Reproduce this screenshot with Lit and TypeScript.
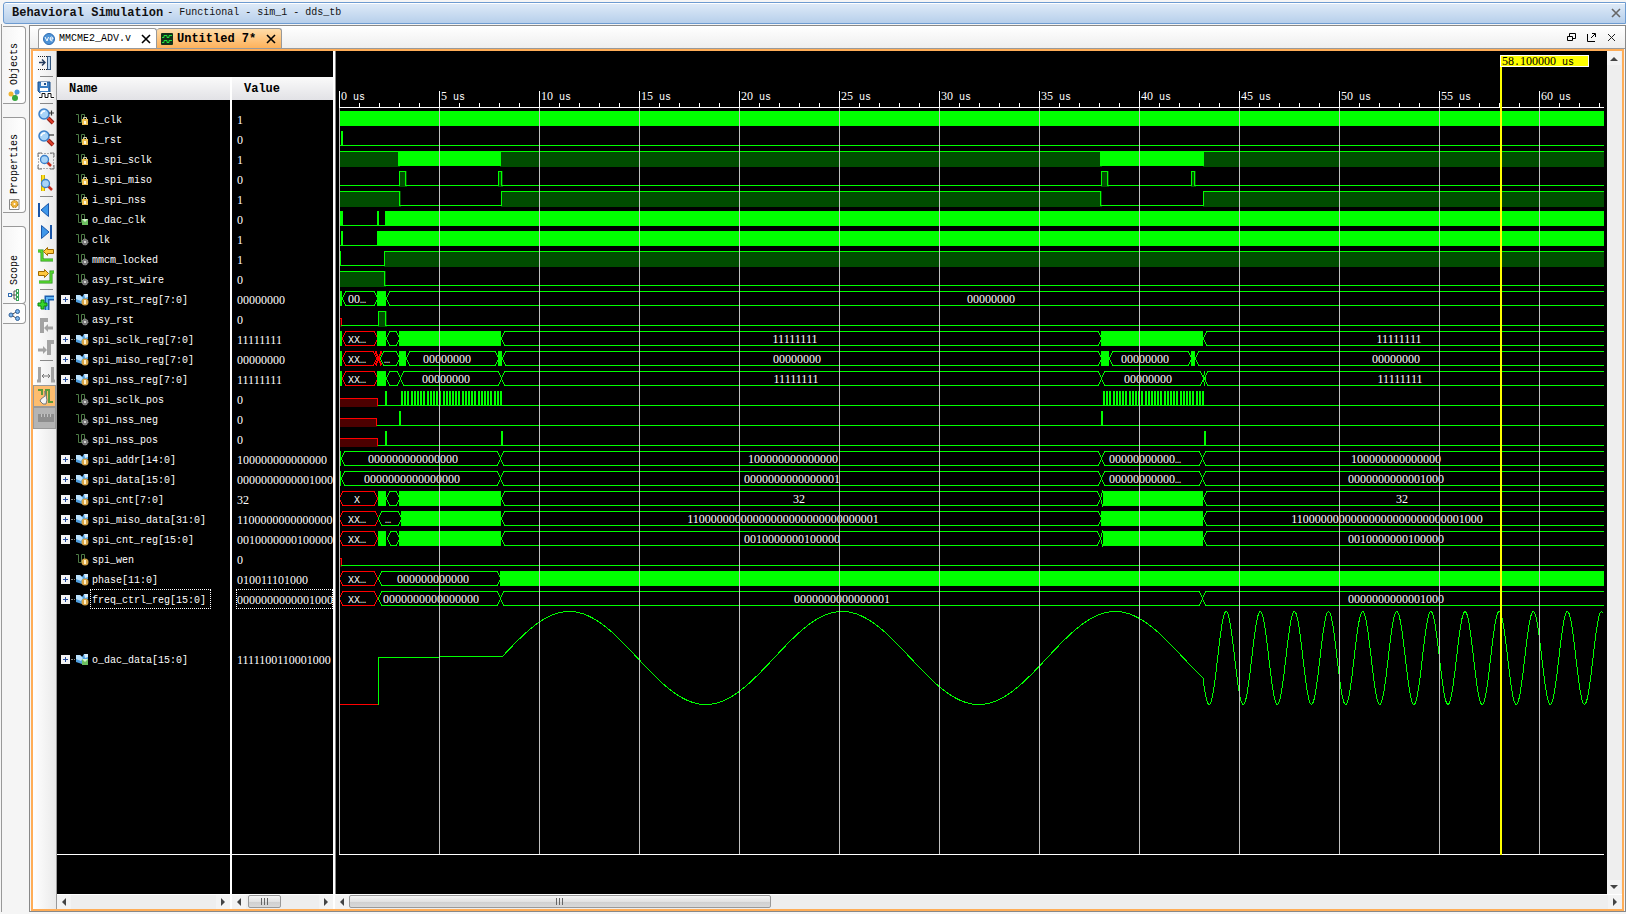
import { LitElement, html, svg, css, nothing } from "lit";
import { customElement, property, state } from "lit/decorators.js";
import { classMap } from "lit/directives/class-map.js";

type Kind = "in" | "out" | "net" | "reg" | "bus" | "busout";
/** Segment: [shape, start, end, label?, label centre?], positions in 50 ns steps. */
type Shape = "solid" | "high" | "low" | "hex" | "xhex" | "unk" | "comb" | "xx";
type Seg = [Shape, number, number, string?, number?];
interface Signal { name: string; value: string; kind: Kind; segs: Seg[]; focus?: boolean; tall?: boolean }

const END = 4000;
const O16 = "0000000000000001";
const L16 = "0000000000001000";

const SIGNALS: Signal[] = [
  { name: "i_clk", value: "1", kind: "in", segs: [["solid", 0, END]] },
  { name: "i_rst", value: "0", kind: "in", segs: [["low", 0, END], ["solid", 2, 4]] },
  { name: "i_spi_sclk", value: "1", kind: "in", segs: [["high", 0, 60], ["solid", 60, 161], ["high", 161, 762], ["solid", 762, 864], ["high", 864, END]] },
  { name: "i_spi_miso", value: "0", kind: "in", segs: [["low", 0, 60], ["high", 60, 67], ["low", 67, 159], ["high", 159, 163], ["low", 163, 762], ["high", 762, 769], ["low", 769, 852], ["high", 852, 856], ["low", 856, END]] },
  { name: "i_spi_nss", value: "1", kind: "in", segs: [["high", 0, 61], ["low", 61, 162], ["high", 162, 762], ["low", 762, 864], ["high", 864, END]] },
  { name: "o_dac_clk", value: "0", kind: "out", segs: [["solid", 0, 4], ["low", 4, 46], ["solid", 38, 40], ["solid", 46, END]] },
  { name: "clk", value: "1", kind: "net", segs: [["low", 0, 38], ["solid", 2, 4], ["solid", 38, END]] },
  { name: "mmcm_locked", value: "1", kind: "net", segs: [["solid", 0, 2], ["low", 1, 45], ["high", 45, END]] },
  { name: "asy_rst_wire", value: "0", kind: "net", segs: [["high", 0, 46], ["low", 45, END]] },
  { name: "asy_rst_reg[7:0]", value: "00000000", kind: "bus", segs: [["solid", 0, 3], ["hex", 3, 38, "00…", 18], ["solid", 38, 47], ["hex", 47, END, "00000000", 652]] },
  { name: "asy_rst", value: "0", kind: "net", segs: [["unk", 0, 3], ["low", 2, 39], ["high", 39, 47], ["low", 47, END]] },
  { name: "spi_sclk_reg[7:0]", value: "11111111", kind: "bus", segs: [["solid", 0, 3], ["xhex", 3, 38, "XX…", 18], ["solid", 38, 47], ["hex", 47, 60], ["solid", 60, 162], ["hex", 162, 762, "11111111", 456], ["solid", 762, 864], ["hex", 864, END, "11111111", 1060]] },
  { name: "spi_miso_reg[7:0]", value: "00000000", kind: "bus", segs: [["solid", 0, 3], ["xhex", 3, 37, "XX…", 18], ["xx", 36, 42], ["hex", 41, 60, "…", 48], ["solid", 60, 67], ["hex", 67, 159, "00000000", 108], ["solid", 159, 163], ["hex", 163, 762, "00000000", 458], ["solid", 762, 770], ["hex", 770, 852, "00000000", 806], ["solid", 852, 856], ["hex", 856, END, "00000000", 1057]] },
  { name: "spi_nss_reg[7:0]", value: "11111111", kind: "bus", segs: [["solid", 0, 3], ["xhex", 3, 38, "XX…", 18], ["solid", 38, 47], ["hex", 47, 61], ["hex", 61, 162, "00000000", 107], ["hex", 162, 762, "11111111", 457], ["hex", 762, 864, "00000000", 809], ["hex", 864, 866], ["hex", 865, END, "11111111", 1061]] },
  { name: "spi_sclk_pos", value: "0", kind: "net", segs: [["unk", 0, 39], ["low", 39, END], ["solid", 46, 48], ["comb", 62, 163], ["comb", 764, 865]] },
  { name: "spi_nss_neg", value: "0", kind: "net", segs: [["unk", 0, 38], ["low", 38, END], ["solid", 60, 62], ["solid", 762, 764]] },
  { name: "spi_nss_pos", value: "0", kind: "net", segs: [["unk", 0, 39], ["low", 39, END], ["solid", 46, 48], ["solid", 162, 164], ["solid", 865, 867]] },
  { name: "spi_addr[14:0]", value: "100000000000000", kind: "bus", segs: [["solid", 0, 2], ["hex", 2, 161, "000000000000000", 74], ["hex", 161, 762, "100000000000000", 454], ["hex", 762, 863, "00000000000…", 806], ["hex", 863, END, "100000000000000", 1057]] },
  { name: "spi_data[15:0]", value: L16, kind: "bus", segs: [["solid", 0, 2], ["hex", 2, 161, "0000000000000000", 73], ["hex", 161, 762, O16, 453], ["hex", 762, 863, "00000000000…", 806], ["hex", 863, END, L16, 1057]] },
  { name: "spi_cnt[7:0]", value: "32", kind: "bus", segs: [["xhex", 0, 38, "X", 18], ["solid", 39, 47], ["hex", 47, 60], ["solid", 60, 162], ["hex", 162, 761, "32", 460], ["hex", 761, 765], ["solid", 764, 864], ["hex", 864, END, "32", 1063]] },
  { name: "spi_miso_data[31:0]", value: "1100000000000000", kind: "bus", segs: [["xhex", 0, 39, "XX…", 18], ["hex", 39, 62, "…", 49], ["solid", 62, 162], ["hex", 162, 762, "11000000000000000000000000000001", 444], ["solid", 762, 864], ["hex", 864, END, "11000000000000000000000000001000", 1048]] },
  { name: "spi_cnt_reg[15:0]", value: "0010000000100000", kind: "bus", segs: [["xhex", 0, 38, "XX…", 18], ["solid", 39, 47], ["hex", 48, 60], ["solid", 60, 162], ["hex", 162, 761, "0010000000100000", 453], ["hex", 761, 765], ["solid", 764, 864], ["hex", 864, END, "0010000000100000", 1057]] },
  { name: "spi_wen", value: "0", kind: "reg", segs: [["unk", 0, 3], ["low", 2, END]] },
  { name: "phase[11:0]", value: "010011101000", kind: "bus", segs: [["xhex", 0, 38, "XX…", 18], ["hex", 39, 161, "000000000000", 94], ["solid", 161, END]] },
  { name: "freq_ctrl_reg[15:0]", value: L16, kind: "bus", focus: true, segs: [["xhex", 0, 38, "XX…", 18], ["hex", 39, 161, "0000000000000000", 92], ["hex", 161, 863, O16, 503], ["hex", 863, END, L16, 1057]] },
  { name: "o_dac_data[15:0]", value: "1111100110001000", kind: "busout", tall: true, segs: [] },
];

const cross = svg`<path d="M1 1L9 9M9 1L1 9" fill="none" stroke="currentColor" stroke-width="1.600"/>`;

const lens = svg`
  <path d="M11 10L16 15" stroke="#8f1d14" stroke-width="4"/><path d="M11 10L16 15" stroke="#e0402c" stroke-width="2"/>
  <circle cx="7" cy="6" r="5" fill="#a8d4f8" stroke="#3b7fc8" stroke-width="1.5"/><path d="M4 6Q5 3 8 3" stroke="#fff" fill="none" stroke-width="1.5"/>`;

const TOOLS: Record<string, unknown> = {
  "Dock panel": svg`<path d="M1 2.500H11M1 15.500H11" stroke="#222" stroke-dasharray="1 1"/><path d="M2 8.500H8M5 5.500L8 8.500L5 11.500" fill="none" stroke="#223a5c" stroke-width="1.4"/><rect x="10.5" y="2.5" width="3" height="13" fill="#bcd8f2" stroke="#35577f"/>`,
  "Save waveform": svg`<path d="M1 1H13V12H3L1 10Z" fill="#3c7fc4" stroke="#1d4f8a"/><rect x="4" y="1" width="6" height="4" fill="#eef5fc"/><rect x="7" y="2" width="2" height="2" fill="#1d4f8a"/><rect x="3" y="7" width="8" height="3" fill="#fff"/><path d="M2 16.500H5V12.500H8V16.500H11V12.500H14V16.500H17" stroke="#fff" stroke-width="3" fill="none"/><path d="M2 16.500H5V12.500H8V16.500H11V12.500H14V16.500H17" stroke="#111" fill="none"/>`,
  "Zoom in": svg`${lens}<path d="M12 5H17M14.500 2.500V7.500" stroke="#333" stroke-width="1.2"/>`,
  "Zoom out": svg`${lens}<path d="M12 5H17" stroke="#333" stroke-width="1.2"/>`,
  "Zoom fit": svg`<rect x="1.500" y="1.500" width="15" height="15" fill="none" stroke="#666" stroke-dasharray="1 2"/><path d="M1 5V1H5M13 1H17V5M17 13V17H13M5 17H1V13" fill="none" stroke="#777"/><path d="M10 10L14 14" stroke="#c8301f" stroke-width="2.500"/><circle cx="7.500" cy="7.500" r="4" fill="#a8d4f8" stroke="#3b7fc8" stroke-width="1.300"/>`,
  "Zoom to cursor": svg`<path d="M6 1V17" stroke="#b99700" stroke-width="4"/><path d="M6 1V17" stroke="#ffe21c" stroke-width="2.500"/><path d="M11 12L15 16" stroke="#c8301f" stroke-width="2.500"/><circle cx="8.500" cy="9.500" r="4" fill="#a8d4f8" stroke="#3b7fc8" stroke-width="1.300"/>`,
  "Go to time 0": svg`<path d="M1 2H3V16H1Z" fill="#1b56a8"/><path d="M11.500 2.500V15.500L4 9Z" fill="#3f97ea" stroke="#1b56a8"/>`,
  "Go to last time": svg`<path d="M13 2H15V16H13Z" fill="#1b56a8"/><path d="M4.500 2.500V15.500L12 9Z" fill="#3f97ea" stroke="#1b56a8"/>`,
  "Previous transition": svg`<path d="M1 6H5V15H16" fill="none" stroke="#208a12" stroke-width="3"/><path d="M1 6H5V15H16" fill="none" stroke="#5be035" stroke-width="1.500"/><path d="M6.500 6.500L10.500 2.500V4.500H16.500V8.500H10.500V10.500Z" fill="#ffc83d" stroke="#a06a00"/>`,
  "Next transition": svg`<path d="M2 15H14V5H17" fill="none" stroke="#208a12" stroke-width="3"/><path d="M2 15H14V5H17" fill="none" stroke="#5be035" stroke-width="1.500"/><path d="M11.500 6.500L7.500 2.500V4.500H1.500V8.500H7.500V10.500Z" fill="#ffc83d" stroke="#a06a00"/>`,
  "Add marker": svg`<path d="M10 16V4H17" fill="none" stroke="#1b5fae" stroke-width="5"/><path d="M10 16V4H17" fill="none" stroke="#5eb4f4" stroke-width="2"/><path d="M1 9H4V6H7V9H10V12H7V15H4V12H1Z" fill="#35d52b" stroke="#118310"/>`,
  "Previous marker": svg`<path d="M5 17V4H11" fill="none" stroke="#a3a3a3" stroke-width="4"/><path d="M7 12L11 8V10.500H16V13.500H11V16Z" fill="#a3a3a3"/>`,
  "Next marker": svg`<path d="M12 17V4H17" fill="none" stroke="#a3a3a3" stroke-width="4"/><path d="M10 12L6 8V10.500H1V13.500H6V16Z" fill="#a3a3a3"/>`,
  "Swap cursors": svg`<path d="M2.500 2V16H0M15.500 2V16H18" fill="none" stroke="#a3a3a3" stroke-width="3"/><path d="M5 11H13M7 9L5 11L7 13M11 9L13 11L11 13" stroke="#777" fill="none"/>`,
  "Snap to transition": svg`<path d="M1 3H5V8M9 15V3H12V15H16" fill="none" stroke="#5c9a3a" stroke-width="2"/><path d="M8 4L8 9L4 12L3 14L6 17H9L10 13Z" fill="#f4f4f4" stroke="#777"/>`,
  "Floating ruler": svg`<rect x="1" y="5" width="16" height="8" fill="#8e8e8e"/><path d="M4.500 5V8M7.500 5V8M10.500 5V8M13.500 5V8" stroke="#c4c4c4"/>`,
};
const SEPARATOR_AFTER = new Set(["Dock panel", "Save waveform", "Zoom to cursor", "Next transition", "Next marker"]);

@customElement("signal-icon")
class SignalIcon extends LitElement {
  @property() kind: Kind = "net";
  static styles = css`:host { display: block; width: 13px; height: 13px; flex: none; } svg { display: block; }`;
  render() {
    const k = this.kind;
    const bus = k === "bus" || k === "busout";
    const base = bus
      ? svg`<path d="M0 2H4L6 4L8 1H12V6L8 8L6 11L0 9Z" fill="#4f9fe0"/><path d="M0 2H4L7 5L5 8L0 6Z" fill="#b9e0fb"/><path d="M8 1H12V4L9 5Z" fill="#d4ecfd"/>`
      : svg`<path d="M0 1.500H2.500V9.500H5.500V1.500H8.500V6" fill="none" stroke="#4d7a45"/>`;
    const badge = k === "in"
      ? svg`<rect x="6" y="6" width="6" height="6" fill="#f0c050"/><rect x="8" y="8" width="2" height="3" fill="#fff8dc"/><path d="M7.500 6V4.500H10.500V6" fill="none" stroke="#d8d0b0"/>`
      : k === "out" || k === "busout"
        ? svg`<rect x="6" y="6" width="6" height="6" fill="#6cc060"/><path d="M6 6H12L9 9Z" fill="#d9f3d2"/>`
        : k === "net"
          ? svg`<circle cx="9" cy="9" r="3" fill="#777" stroke="#b4b4b4" stroke-dasharray="1 1"/><circle cx="9" cy="9" r="1" fill="#eee"/>`
          : svg`<circle cx="9" cy="9" r="3.500" fill="#d9a648"/><rect x="8" y="7" width="2" height="4" fill="#fff0c8"/>`;
    return html`<svg width="13" height="13" aria-hidden="true">${base}${badge}</svg>`;
  }
}

@customElement("scroll-strip")
class ScrollStrip extends LitElement {
  @property({ type: Boolean, reflect: true }) vertical = false;
  /** Thumb start and length as a share of the track, in percent. */
  @property({ type: Number }) start = 0;
  @property({ type: Number }) size = 0;
  static styles = css`
    :host { display: flex; flex: none; height: 14px; background: #eee; border-top: 1px solid #fff; box-sizing: content-box; }
    :host([vertical]) { flex-direction: column; width: 15px; height: auto; border: 0; }
    button { width: 14px; height: 14px; padding: 0; border: 0; background: #f3f3f3; flex: none; }
    svg { display: block; margin: auto; }
    .track { flex: 1; display: flex; }
    .thumb { border: 1px solid #999; border-radius: 2px; box-sizing: border-box; height: 13px; background: linear-gradient(#f6f6f6, #e2e2e2 50%, #cfcfcf 51%, #d9d9d9); display: flex; align-items: center; justify-content: center; }
  `;
  render() {
    const [a, b] = this.vertical ? ["M1 8L5 4L9 8Z", "M1 3L5 7L9 3Z"] : ["M7 1V9L3 5Z", "M3 1V9L7 5Z"];
    return html`
      <button aria-label="Scroll back"><svg width="10" height="10"><path d=${a} fill="#444"/></svg></button>
      <div class="track">
        <div style="width:${this.start}%"></div>
        ${this.size ? html`<div class="thumb" style="width:${this.size}%"><svg width="9" height="7"><path d="M1.500 0V7M4.500 0V7M7.500 0V7" stroke="#666"/></svg></div>` : nothing}
      </div>
      <button aria-label="Scroll forward"><svg width="10" height="10"><path d=${b} fill="#444"/></svg></button>`;
  }
}

@customElement("wave-view")
class WaveView extends LitElement {
  /** Visible length of the time axis, in 50 ns steps. */
  @state() private span = 1265;
  private observer?: ResizeObserver;

  static styles = css`
    :host { display: block; min-height: 0; overflow: hidden; }
    svg { display: block; width: 100%; height: 100%; shape-rendering: crispEdges; }
    text { font-family: "Liberation Mono", monospace; font-size: 10px; fill: #fff; }
    .num { font-family: "Liberation Serif", serif; font-size: 12px; }
    .dark { fill: #004d00; }
    .lit { fill: #0f0; }
    .wire { fill: none; stroke: #0f0; }
    .bad { fill: none; stroke: #f00; }
    .badfill { fill: #4d0000; }
    .grid { fill: #c0c0c0; }
    .white { fill: #fff; }
    .cursor { fill: #ff0; }
    .flag { fill: #ff0; stroke: #fff; }
    .flagtext { fill: #000; }
  `;

  connectedCallback() {
    super.connectedCallback();
    this.observer = new ResizeObserver(([e]) => { this.span = Math.floor(e.contentRect.width) - 3; });
    this.observer.observe(this);
  }

  disconnectedCallback() {
    this.observer?.disconnect();
    super.disconnectedCallback();
  }

  private mixed(t: string) {
    return t.split(/(\d+)/).filter(Boolean).map((p) => (/\d/.test(p) ? svg`<tspan class="num">${p}</tspan>` : p));
  }

  private seg([shape, a, b, label, at]: Seg, y: number) {
    const w = b - a;
    const l = a + 0.5, r = b + 0.5, t = y + 0.5, m = y + 7.5, d = y + 14.5;
    switch (shape) {
      case "solid": return svg`<rect class="lit" x=${a} y=${y} width=${w} height="15"/>`;
      case "low": return svg`<rect class="lit" x=${a} y=${y + 14} width=${w} height="1"/>`;
      case "high": return svg`<rect class="dark" x=${a} y=${y} width=${w + 1} height="16"/><path class="wire" d="M${l} ${d}V${t}H${r - 1}V${d}"/>`;
      case "unk": return svg`<rect class="badfill" x=${a} y=${y + 7} width=${w} height="9"/><path class="bad" d="M${l} ${d}V${m}H${r - 1}V${d}"/>`;
      case "comb": return Array.from({ length: 32 }, (_, i) => svg`<rect class="lit" x=${a + Math.round((i * (w - 2)) / 31)} y=${y} width="2" height="15"/>`);
      case "xx": return svg`<path class="bad" stroke-width="2" d="M${l} ${t}L${r} ${d}M${r} ${t}L${l} ${d}"/>`;
      default: {
        const s = Math.min(3, w / 2);
        const cls = shape === "xhex" ? "bad" : "wire";
        return svg`<path class=${cls} d="M${l} ${m}L${l + s} ${t}H${r - s}L${r} ${m}L${r - s} ${d}H${l + s}Z"/>
          ${label && at! < this.span ? svg`<text x=${at!} y=${y + 12} text-anchor="middle">${this.mixed(label)}</text>` : nothing}`;
      }
    }
  }

  private analog() {
    const mid = 607, amp = 46.5, from = 162, change = 864, slow = 273, fast = 34.125;
    let d = `M39.5 653.500V606.500H100V605.500H${from}`;
    for (let x = from + 1; x < this.span; x++) {
      const turns = x < change ? (x - from) / slow : (change - from) / slow + (x - change) / fast;
      d += `L${x} ${(mid - amp * Math.sin(turns * 2 * Math.PI)).toFixed(2)}`;
    }
    return svg`<path class="bad" d="M0 653.500H39"/><path class="wire" d=${d}/>`;
  }

  render() {
    const majors = Array.from({ length: Math.ceil(this.span / 100) }, (_, i) => i * 5);
    const minors = Array.from({ length: Math.ceil(this.span / 20) }, (_, i) => i);
    return html`<svg role="img" aria-label="Waveforms">
      <g transform="translate(3 0)">
        ${SIGNALS.map((s, i) => s.segs.map((g) => this.seg(g, 60 + i * 20)))}
        ${this.analog()}
        ${majors.map((u) => svg`<rect class="grid" x=${u * 20} y="57" width="1" height="100%"/>
          <rect class="white" x=${u * 20} y="40" width="1" height="17"/>
          <text x=${u * 20 + 2} y="49">${this.mixed(u + " us")}</text>`)}
        ${minors.map((u) => svg`<rect class="white" x=${u * 20} y="52" width="1" height="4"/>`)}
        <rect class="white" x="0" y="56" width="4000" height="1"/>
        <rect class="white" x="0" y="100%" width="4000" height="1" transform="translate(0 -1)"/>
        <rect class="cursor" x="1161" y="4" width="2" height="100%"/>
        <rect class="flag" x="1161.5" y="4.500" width="88" height="11"/>
        <text class="flagtext" x="1163" y="14">${this.mixed("58.100000 us")}</text>
      </g>
    </svg>`;
  }
}

@customElement("app-root")
class AppRoot extends LitElement {
  static styles = css`
    :host { display: flex; flex-direction: column; height: 100vh; min-height: 820px; box-sizing: border-box; padding: 2px 0 2px 1px; background: #f5f5f5; font: 10px/20px "Liberation Mono", monospace; color: #000; overflow: hidden; }
    button { font: inherit; color: inherit; padding: 0; border: 0; background: none; display: flex; align-items: center; justify-content: center; }
    svg { display: block; flex: none; }
    h1 { margin: 0; font-size: 12px; line-height: 20px; }
    .title { display: flex; align-items: center; gap: 4px; height: 20px; flex: none; margin-left: 2px; padding: 0 4px 0 8px; border: 1px solid #6d9bd0; border-radius: 3px 0 0 3px; background: linear-gradient(#dfebf8, #b7cfeb); box-shadow: inset 0 1px #fff; color: #111; }
    .title h1, .title span { line-height: 22px; }
    .title button { margin-left: auto; color: #666; }
    .body { flex: 1; display: flex; min-height: 0; border-left: 1px solid #999; padding-top: 1px; }
    .rail { width: 27px; flex: none; display: flex; flex-direction: column; gap: 13px; padding-top: 1px; box-sizing: border-box; }
    .rail button { writing-mode: vertical-rl; transform: rotate(180deg); width: 23px; margin-left: 1px; gap: 4px; line-height: 21px; border: 1px solid #999; border-right: 0; border-radius: 4px 0 0 4px; background: linear-gradient(to left, #f5f5f5, #fff); justify-content: flex-start; padding-top: 2px; box-sizing: border-box; }
    .rail svg { transform: rotate(180deg); }
    .objects { height: 78px; } .properties { height: 96px; } .scope { height: 78px; }
    .share { height: 21px; margin-top: -14px; }
    .window { flex: 1; min-width: 0; display: flex; flex-direction: column; border: 1px solid #888; }
    .tabs { height: 22px; flex: none; display: flex; align-items: flex-end; padding: 0 8px; background: linear-gradient(#fff, #eee); border-bottom: 1px solid #999; }
    .tab { height: 20px; display: flex; align-items: center; gap: 4px; padding: 0 5px 0 4px; border: 1px solid #999; border-bottom: 0; border-radius: 3px 3px 0 0; background: #fff; box-sizing: border-box; }
    .tab .close { margin-left: 6px; }
    .tab.on { background: linear-gradient(#ffdca8, #fdb25c); font-weight: bold; font-size: 12px; border-left: 0; }
    .tools { margin-left: auto; display: flex; gap: 9px; align-self: center; padding-top: 1px; }
    .frame { flex: 1; min-height: 0; display: flex; border: solid #ffad57; border-width: 2px; margin: 0 1px; }
    .toolbar { width: 24px; flex: none; box-sizing: border-box; padding-top: 1px; background: linear-gradient(to right, #fff, #eaeaea); border-right: 1px solid #999; }
    .toolbar button { width: 100%; height: 22px; padding-left: 3px; box-sizing: border-box; }
    .toolbar .active { background: #fdbd6f; border: 1px solid #999; }
    .toolbar .off { background: #b4b4b4; border: 1px solid #999; }
    .toolbar hr { height: 1px; border: 0; background: #888; margin: 2px 3px 2px 7px; }
    .left { width: 276px; flex: none; display: flex; flex-direction: column; background: #000; padding-top: 26px; box-sizing: border-box; }
    .panes { flex: 1; min-height: 0; display: grid; grid-template-columns: 173px 1fr; gap: 2px; background: #fff; }
    .pane { display: flex; flex-direction: column; min-width: 0; background: #000; color: #fff; overflow: hidden; }
    table { border-collapse: collapse; width: 100%; table-layout: fixed; }
    th { height: 23px; padding: 0 0 0 12px; text-align: left; font-size: 12px; line-height: 22px; color: #000; background: linear-gradient(#fafafa, #e2e2e6); }
    thead::after { content: ""; display: block; height: 9px; }
    td { padding: 0; height: 20px; }
    .tall td { height: 100px; }
    .name { display: flex; align-items: center; height: 20px; padding-left: 4px; }
    .plus { width: 9px; height: 9px; flex: none; background: #f2f2f2; }
    .dots { width: 4px; margin: 0 1px; border-top: 1px dotted #888; }
    .indent { width: 15px; }
    .label { box-sizing: border-box; height: 20px; line-height: 24px; margin-left: 1px; padding: 0 1px; border: 1px solid transparent; border-width: 0 1px; white-space: nowrap; }
    .value { box-sizing: border-box; height: 20px; line-height: 22px; margin-left: 4px; padding-left: 1px; font-family: "Liberation Serif", serif; font-size: 12px; white-space: nowrap; }
    .focus { outline: 1px dotted #fff; outline-offset: -1px; padding-right: 4px; }
    .rest { flex: 1; border-bottom: 1px solid #fff; }
    .foot { height: 39px; flex: none; }
    .wave { flex: 1; min-width: 0; display: flex; flex-direction: column; background: #000; border-left: 2px solid #fff; box-shadow: inset 1px 0 #888; }
    .plot { flex: 1; display: flex; flex-direction: column; min-width: 0; min-height: 0; padding: 0 3px 0 1px; }
    wave-view { flex: 1; }
    .cell { display: flex; flex: 1; min-width: 0; min-height: 0; }
  `;

  private pane(title: string, cell: (s: Signal) => unknown, start: number, size: number) {
    return html`<section class="pane">
      <table>
        <thead><tr><th scope="col">${title}</th></tr></thead>
        <tbody>${SIGNALS.map((s) => html`<tr class=${classMap({ tall: !!s.tall })}><td>${cell(s)}</td></tr>`)}</tbody>
      </table>
      <div class="rest"></div><div class="foot"></div>
      <scroll-strip .start=${start} .size=${size}></scroll-strip>
    </section>`;
  }

  render() {
    return html`
      <header class="title">
        <h1>Behavioral Simulation</h1><span>- Functional - sim_1 - dds_tb</span>
        <button aria-label="Close view"><svg width="10" height="10">${cross}</svg></button>
      </header>
      <div class="body">
        <nav class="rail">
          <button class="objects"><svg width="12" height="12"><path d="M3 5L7 8L9 3" stroke="#777" fill="none"/><circle cx="3" cy="5" r="2.500" fill="#f2b632"/><circle cx="9" cy="3" r="2.500" fill="#4b97dc"/><circle cx="7" cy="9" r="3" fill="#35a83c"/></svg>Objects</button>
          <button class="properties"><svg width="12" height="12"><path d="M1.500 1.500H11V11.500H1.500Z" fill="#fff" stroke="#888"/><circle cx="6.500" cy="6" r="3.500" fill="#f0b43c" stroke="#b07a10" stroke-dasharray="2 1"/><circle cx="6.500" cy="6" r="1" fill="#fff"/></svg>Properties</button>
          <button class="scope"><svg width="12" height="12"><path d="M4 6H8M6 2V10M6 2H8M6 10H8" stroke="#555" fill="none"/><rect x="0.500" y="4.500" width="3" height="3" fill="#fff" stroke="#2f6bb0"/><rect x="8.500" y="0.500" width="2" height="3" fill="#fff" stroke="#3ba35a"/><rect x="8.500" y="4.500" width="2" height="3" fill="#fff" stroke="#3ba35a"/><rect x="8.500" y="8.500" width="2" height="3" fill="#fff" stroke="#3ba35a"/></svg>Scope</button>
          <button class="share" aria-label="Sources"><svg width="12" height="12"><path d="M9 2.500L3 6L9 9.500" stroke="#555" fill="none"/><circle cx="3" cy="6" r="2" fill="#7fb6ea" stroke="#2f5f98"/><circle cx="9.500" cy="2.500" r="2" fill="#7fb6ea" stroke="#2f5f98"/><circle cx="9.500" cy="9.500" r="2" fill="#7fb6ea" stroke="#2f5f98"/></svg></button>
        </nav>
        <div class="window">
          <div class="tabs">
            <div class="tab"><svg width="12" height="12"><circle cx="6" cy="6" r="5.500" fill="#4e94d8" stroke="#2f6bb0"/><path d="M2 4L4 8L5.500 4M7 6H10Q10 4 8.500 4Q7 4 7 6Q7 8 9.500 8" stroke="#fff" fill="none"/></svg><span>MMCME2_ADV.v</span><button class="close" aria-label="Close MMCME2_ADV.v"><svg width="10" height="10">${cross}</svg></button></div>
            <div class="tab on"><svg width="12" height="12"><rect width="12" height="12" rx="1" fill="#12301a"/><path d="M1 4.500H3V2.500H6V4.500H8V2.500H11M1 9.500H3V7.500H6V9.500H8V7.500H11" fill="none" stroke="#21e03a"/></svg><span>Untitled 7*</span><button class="close" aria-label="Close Untitled 7"><svg width="10" height="10">${cross}</svg></button></div>
            <div class="tools">
              <button aria-label="Restore"><svg width="11" height="11"><path d="M3.500 5V1.500H9.500V6.500H7M1.500 4.500H6.500V8.500H1.500Z" fill="none" stroke="#000"/></svg></button>
              <button aria-label="Float"><svg width="11" height="11"><path d="M1.500 2V9.500H9M5 6L9 2M6 1.500H9.500V5" fill="none" stroke="#000"/></svg></button>
              <button aria-label="Close window"><svg width="11" height="11"><path d="M2 2L9 9M9 2L2 9" stroke="#222"/></svg></button>
            </div>
          </div>
          <div class="frame">
            <div class="toolbar" role="toolbar" aria-label="Waveform">
              ${Object.entries(TOOLS).map(([name, art]) => html`
                <button class=${classMap({ active: name === "Snap to transition", off: name === "Floating ruler" })} aria-label=${name}><svg width="18" height="18">${art}</svg></button>
                ${SEPARATOR_AFTER.has(name) ? html`<hr>` : nothing}`)}
            </div>
            <div class="left">
              <div class="panes">
                ${this.pane("Name", (s) => html`<div class="name">
                  ${s.kind.startsWith("bus")
                    ? html`<button class="plus" aria-label="Expand ${s.name}"><svg width="9" height="9"><path d="M2 4.500H7M4.500 2V7" stroke="#234a9c"/></svg></button><span class="dots"></span>`
                    : html`<span class="indent"></span>`}
                  <signal-icon .kind=${s.kind}></signal-icon>
                  <span class=${classMap({ label: true, focus: !!s.focus })}>${s.name}</span></div>`, 0, 0)}
                ${this.pane("Value", (s) => html`<div class=${classMap({ value: true, focus: !!s.focus })}>${s.value}</div>`, 3, 45)}
              </div>
            </div>
            <div class="wave">
              <div class="cell">
                <div class="plot"><wave-view></wave-view><div class="foot"></div></div>
                <scroll-strip vertical></scroll-strip>
              </div>
              <scroll-strip .start=${0} .size=${33.5}></scroll-strip>
            </div>
          </div>
        </div>
      </div>`;
  }
}
